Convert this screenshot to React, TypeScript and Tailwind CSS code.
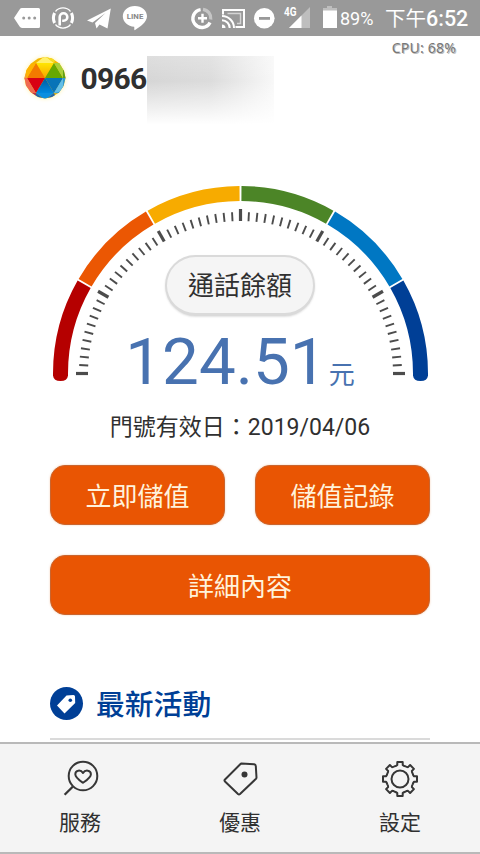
import React from 'react';

const SEGMENTS = ['#b50000', '#eb5703', '#f7ab00', '#4c8527', '#0077c3', '#003f96'];
const CX = 187.5;
const CY = 187.5;

function point(radius: number, degrees: number): [number, number] {
  const a = (degrees * Math.PI) / 180;
  return [CX - radius * Math.cos(a), CY - radius * Math.sin(a)];
}

function Gauge() {
  const ticks = Array.from({ length: 61 }, (_, i) => i);
  return (
    <svg className="absolute left-0 top-0" width="375" height="196" viewBox="0 0 375 196" fill="none">
      {SEGMENTS.map((color, i) => {
        const [x1, y1] = point(180, i * 30 + (i === 0 ? 0 : 0.3));
        const [x2, y2] = point(180, (i + 1) * 30 - (i === 5 ? 0 : 0.3));
        return <path key={color} d={`M${x1} ${y1}A180 180 0 0 1 ${x2} ${y2}`} stroke={color} strokeWidth="15" />;
      })}
      <path d="M0 187V189.500Q.600 195 7.500 195Q14.400 195 15 189.500V187Z" fill="#b50000" />
      <path d="M360 187V189.500Q360.600 195 367.500 195Q374.400 195 375 189.500V187Z" fill="#003f96" />
      {ticks.map((i) => {
        const major = i % 10 === 0;
        const [x1, y1] = point(152.5, i * 3);
        const [x2, y2] = point(major ? 164.5 : 161.5, i * 3);
        return <line key={i} x1={x1} y1={y1} x2={x2} y2={y2} stroke="#4c4c4c" strokeWidth={major ? 3.2 : 1.9} />;
      })}
    </svg>
  );
}

function StatusBar() {
  return (
    <div className="flex h-9 w-full items-center bg-[#999999] text-white">
      <svg width="320" height="36" viewBox="0 0 320 36" fill="#fff" className="shrink-0">
        <path d="M14 18l5.600-8.600Q20.500 8 22 8H38.500Q40 8 40 9.500V26.500Q40 28 38.500 28H22Q20.500 28 19.600 26.600Z" />
        <g fill="#999">
          <circle cx="23.700" cy="18" r="1.500" />
          <circle cx="29.200" cy="18" r="1.500" />
          <circle cx="34.700" cy="18" r="1.500" />
        </g>
        <g fill="none" stroke="#fff">
          <path d="M55.500 11.500A9.700 9.700 0 0 1 70.500 11.500M55.500 24.500A9.700 9.700 0 0 0 70.500 24.500" strokeWidth="1.200" />
          <path d="M54.600 13Q52.200 18 54.600 23M71.400 13Q73.800 18 71.400 23" strokeWidth="3" />
          <path d="M59.700 25.500V17A3.800 3.800 0 1 1 63.500 20.800H62.200" strokeWidth="2.600" />
        </g>
        <path d="M87 20.500L110.800 8.500L107.500 28.500L99.500 24.400L96.500 28.500L95 23L105.500 13L92.500 22.600Z" />
        <path d="M134.800 6C141.800 6 147 10.600 147 16.300C147 22 140.500 26.500 134.700 30.200C134 30.300 134.500 28 134.200 26.800C128 26.400 122.800 22 122.800 16.300C122.800 10.600 128 6 134.800 6Z" />
        <text x="126.800" y="19.400" textLength="16.500" lengthAdjust="spacingAndGlyphs" fill="#888" className="font-['Roboto'] text-[8px] font-bold">LINE</text>
        <g fill="none" stroke="#fff">
          <path d="M203 9.400A9 9 0 0 1 210.800 19.500" stroke="#c5c5c5" strokeWidth="3.200" />
          <path d="M200.600 9.600A9 9 0 1 0 210 22.500" strokeWidth="3.400" />
          <path d="M198 18.200H207M202.500 13.700V22.700" strokeWidth="2.400" />
          <path d="M223 14.500V10H244V27H235.500" strokeWidth="2" />
          <path d="M222 16A12 12 0 0 1 234 28M222 20.300A7.700 7.700 0 0 1 229.700 28" strokeWidth="2" />
          <path d="M227.500 13.500H240.500V23.500H237" stroke="#d4d4d4" strokeWidth="1.400" />
        </g>
        <path d="M222 24.500A3.500 3.500 0 0 1 225.500 28H222Z" />
        <circle cx="264.300" cy="18.300" r="10.300" />
        <path d="M259 17H270V19.800H259Z" fill="#999" />
        <text x="284" y="16" textLength="12.500" lengthAdjust="spacingAndGlyphs" className="font-['Roboto'] text-[12px] font-bold">4G</text>
        <path d="M310 7V28H289Z" fill="#bebebe" />
        <path d="M301.500 15.500V28H289Z" />
      </svg>
      <svg width="17" height="36" viewBox="0 0 17 36" className="shrink-0">
        <path d="M7 6H12V8H17V11H3V8H7Z" fill="#bebebe" />
        <path d="M3 10.500H17V28H3Z" fill="#fff" />
      </svg>
      <span className="ml-[3px] mt-[2px] w-[45px] whitespace-nowrap text-[18px] leading-9">89%</span>
      <span className="mt-[2px] whitespace-nowrap text-[20.500px] leading-9">下午<span className="text-[21.500px] font-medium">6:52</span></span>
    </div>
  );
}

function Logo() {
  return (
    <svg width="44" height="44" viewBox="0 0 44 44" className="shrink-0 drop-shadow-[0_0_2px_#fff2a8]">
      <defs>
        <clipPath id="ball"><path d="M15 2.500L22 1L29 2.500L36.500 7.500L41 15L42.500 22L40.500 30L36 36.500L29 41L22 42.500L15 41L7.500 36L3 29.500L1.500 22L3.500 14L8 7.500Z" /></clipPath>
        <linearGradient id="sunny" x1="0" y1="0" x2="0" y2="1"><stop offset="0" stopColor="#ffe600" /><stop offset="1" stopColor="#f7a500" /></linearGradient>
        <linearGradient id="sea" x1="0" y1="0" x2="0" y2="1"><stop offset="0" stopColor="#005b9e" /><stop offset="1" stopColor="#0088df" /></linearGradient>
      </defs>
      <g clipPath="url(#ball)">
        <path d="M0 0H44V44H0Z" fill="#f3b600" />
        <path d="M13 7L22 0L31 7Z" fill="#fff06b" />
        <path d="M22 0H34L31 7Z" fill="#f5dc20" />
        <path d="M13 7H31L22 22Z" fill="url(#sunny)" />
        <path d="M13 7L22 22H4Z" fill="#f37a00" />
        <path d="M13 7L4 22L2 10Z" fill="#ffb300" />
        <path d="M4 22L0 10V24Z" fill="#f89c38" />
        <path d="M31 7L40 22H22Z" fill="#66a800" />
        <path d="M31 7L40 7L40 22Z" fill="#a8cf38" />
        <path d="M40 7L46 22H40Z" fill="#5f9f18" />
        <path d="M4 22H22L13 37Z" fill="#d90012" />
        <path d="M0 22H4L13 37L4 37Z" fill="#f06a50" />
        <path d="M4 37H13L14 44Z" fill="#b8324a" />
        <path d="M22 22L31 37H13Z" fill="url(#sea)" />
        <path d="M22 22H40L31 37Z" fill="#0874b8" />
        <path d="M40 22H46L40 38L31 37Z" fill="#2f9ad6" />
        <path d="M40 22L40 35L31 37Z" fill="#65bfe6" />
        <path d="M13 37H31L22 44Z" fill="#0b8fe0" />
        <path d="M13 37L22 44H12ZM31 37L22 44H34Z" fill="#1f66ae" />
      </g>
    </svg>
  );
}

function ActionButton({ label }: { label: string }) {
  return (
    <button className="h-[60px] w-full rounded-[15px] border border-[#c9652f] bg-[#e95503] pt-[3px] text-[26px] leading-none text-[#fff3dc] shadow-[0_0_2px_rgba(233,150,90,0.5)]">
      {label}
    </button>
  );
}

function NavItem({ label, children }: { label: string; children: React.ReactNode }) {
  return (
    <a className="flex flex-1 flex-col items-center pt-[14px]">
      <svg width="40" height="44" viewBox="0 0 40 44" fill="none" stroke="#363636" strokeWidth="2" strokeLinejoin="round" strokeLinecap="round">
        {children}
      </svg>
      <span className="mt-[6px] text-[21px] leading-[30px] text-[#303030]">{label}</span>
    </a>
  );
}

function polar(radius: number, degrees: number) {
  const a = (degrees * Math.PI) / 180;
  return `${(20 + radius * Math.cos(a)).toFixed(2)} ${(21 + radius * Math.sin(a)).toFixed(2)}`;
}

// Eight teeth joined by shallow concave valleys.
function gearPath() {
  let d = '';
  for (let i = 0; i < 8; i++) {
    const c = i * 45 - 90;
    d += `${i === 0 ? 'M' : 'L'}${polar(14.3, c - 11)}L${polar(17.2, c - 9)}L${polar(17.2, c + 9)}L${polar(14.3, c + 11)}`;
    d += `Q${polar(13.6, c + 16)} ${polar(13.8, c + 22.5)}Q${polar(13.6, c + 29)} ${polar(14.3, c + 34)}`;
  }
  return `${d}Z`;
}

export default function App() {
  return (
    <div className="flex h-[854px] w-[480px] flex-col overflow-hidden bg-white font-['Roboto','Noto_Sans_CJK_TC',sans-serif] text-[#303030]">
      <StatusBar />
      <header className="relative flex h-[95px] items-start pl-[23px] pt-[20px]">
        <Logo />
        <span className="ml-[13.500px] mt-[2px] text-[30px] font-bold leading-[42px] tracking-[-0.7px]">0966</span>
        <div className="absolute left-[147px] top-[20px] h-[72px] w-[127px] bg-linear-to-r from-[#d6d6d6] via-[#dcdcdc] via-50% to-[#f8f8f8]">
          <div className="h-full w-full bg-linear-to-b from-white/20 via-transparent via-35% to-white to-95%" />
        </div>
        <span className="absolute right-[24px] top-[2px] font-['Noto_Sans'] text-[14px] leading-5 tracking-[0.2px] text-[#777] [text-shadow:1px_1px_0_#bbb]">CPU: 68%</span>
      </header>

      <main className="flex flex-1 flex-col items-center">
        <section className="relative mt-[55px] flex h-[214px] w-[375px] flex-col items-center">
          <Gauge />
          <div className="mt-[69px] flex h-[61px] w-[150px] shrink-0 items-center justify-center rounded-full border-2 border-b-3 border-[#dadada] bg-[#f5f5f5] pt-[3px] text-[26px] shadow-[0_1px_2px_rgba(0,0,0,0.12)]">
            通話餘額
          </div>
          <div className="mt-[8px] flex h-[76px] items-baseline whitespace-nowrap text-[#4872b0]">
            <span className="text-[65.500px] leading-[76px]">124.51</span>
            <span className="ml-[2px] text-[26px] leading-none">元</span>
          </div>
        </section>

        <p className="mt-[11px] h-[34px] whitespace-nowrap text-[23px] leading-[34px]">門號有效日：2019/04/06</p>

        <div className="mt-[20px] grid w-[380px] grid-cols-2 gap-[30px]">
          <ActionButton label="立即儲值" />
          <ActionButton label="儲值記錄" />
          <div className="col-span-2"><ActionButton label="詳細內容" /></div>
        </div>

        <div className="mt-[65px] flex h-[60px] w-[380px] border-b-2 border-[#dadada]">
          <svg width="34" height="34" viewBox="0 0 34 34" className="mt-[6px]">
            <circle cx="16.500" cy="17.500" r="16.500" fill="#003f96" />
            <path d="M16.500 9.500L23.500 9Q25 9 25 10.500L25.200 17L14.500 27.500L7 19.500Z" fill="#fff" />
            <circle cx="20.300" cy="14.300" r="1.800" fill="#003f96" />
          </svg>
          <h2 className="ml-[12px] mt-[4px] text-[28.800px] font-medium leading-[42px] text-[#003f96]">最新活動</h2>
        </div>
      </main>

      <nav className="flex h-[112px] shrink-0 border-y-2 border-[#b9b9b9] bg-[#f4f4f4]">
        <NavItem label="服務">
          <circle cx="23" cy="18" r="14.300" />
          <path d="M12.700 28.700L4.600 36.800" strokeWidth="2.300" strokeLinecap="butt" />
          <path d="M23 24.800C19 22 15.300 19.500 15.300 16.200C15.300 12 20.800 11.300 23 15C25.200 11.300 30.900 12 30.900 16.200C30.900 19.500 27 22 23 24.800Z" />
        </NavItem>
        <NavItem label="優惠">
          <path d="M21.500 5.500L34 6.300Q35.700 6.500 35.800 8L36.500 19.500Q36.500 20.300 36 20.800L20 36Q19 36.900 18 36L5 23.500Q4 22.500 5 21.500L20.500 6Z" />
          <circle cx="24.500" cy="16.500" r="3" fill="#363636" stroke="none" />
        </NavItem>
        <NavItem label="設定">
          <path d={gearPath()} />
          <circle cx="20" cy="21" r="8.500" />
        </NavItem>
      </nav>
    </div>
  );
}
